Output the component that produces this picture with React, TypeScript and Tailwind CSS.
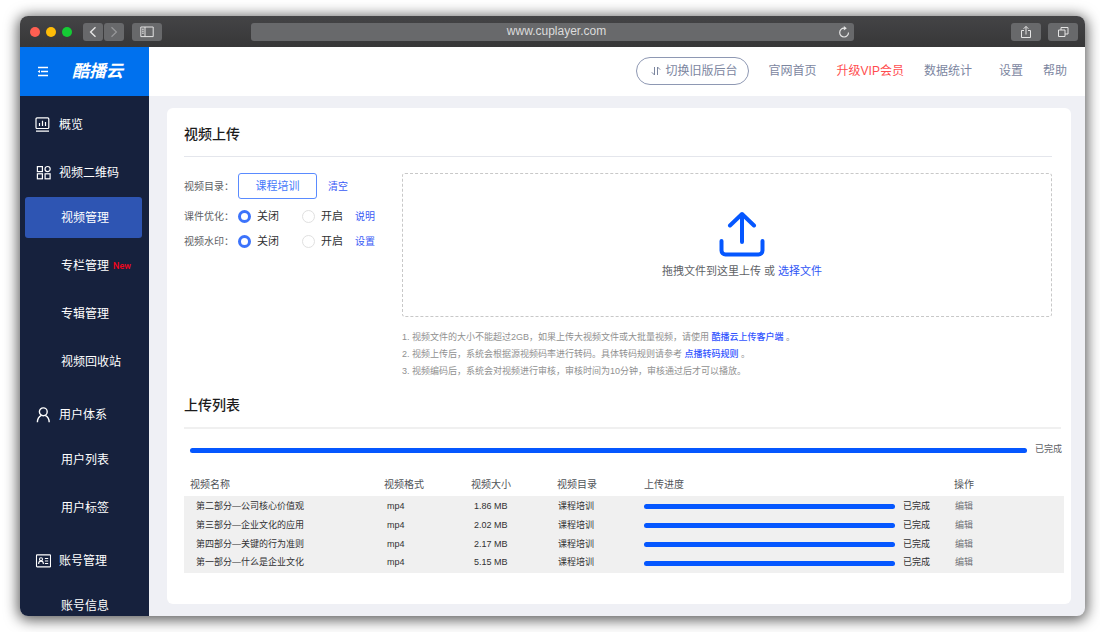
import React from "react";

const videos = [
  { name: "第二部分—公司核心价值观", format: "mp4", size: "1.86 MB", folder: "课程培训", progress: 100 },
  { name: "第三部分—企业文化的应用", format: "mp4", size: "2.02 MB", folder: "课程培训", progress: 100 },
  { name: "第四部分—关键的行为准则", format: "mp4", size: "2.17 MB", folder: "课程培训", progress: 100 },
  { name: "第一部分—什么是企业文化", format: "mp4", size: "5.15 MB", folder: "课程培训", progress: 100 },
];

const OverviewIcon = () => (
  <svg width="16" height="16" viewBox="0 0 16 16" fill="none" stroke="currentColor" strokeWidth="1.2">
    <rect x="1" y="0.900" width="12.800" height="10.600" rx="1" />
    <path d="M4.500 9V6M7.500 9V3.800M10.500 9V5M1 14.200h13" />
  </svg>
);

const GridIcon = () => (
  <svg width="16" height="16" viewBox="0 0 16 16" fill="none" stroke="currentColor" strokeWidth="1.2">
    <rect x="2.4" y="1.600" width="5" height="5" />
    <circle cx="12.600" cy="4.100" r="2.600" />
    <rect x="2.400" y="8.800" width="5" height="5" />
    <rect x="10.100" y="8.800" width="5" height="5" />
  </svg>
);

const UserIcon = () => (
  <svg width="16" height="16" viewBox="0 0 16 16" fill="none" stroke="currentColor" strokeWidth="1.4">
    <circle cx="8.3" cy="4.8" r="3.9" />
    <path d="M2.400 15.300c0-3.400 1.600-5.800 4-7M14.200 15.300c0-3.400-1.600-5.800-4-7" />
  </svg>
);

const AccountIcon = () => (
  <svg width="16" height="16" viewBox="0 0 16 16" fill="none" stroke="currentColor" strokeWidth="1.1">
    <rect x="1.500" y="1.900" width="14" height="12" rx="0.600" />
    <circle cx="6" cy="6.300" r="1.500" />
    <path d="M3.600 11c0-1.800 1-2.900 2.400-2.900s2.400 1.100 2.400 2.900M9.900 5.500h3.300M9.900 8h3.300M9.900 10.500h3.300" />
  </svg>
);

const groups = [
  { title: "概览", icon: OverviewIcon, items: [] },
  {
    title: "视频二维码",
    icon: GridIcon,
    items: [
      { name: "视频管理", active: true },
      { name: "专栏管理", isNew: true },
      { name: "专辑管理" },
      { name: "视频回收站" },
    ],
  },
  { title: "用户体系", icon: UserIcon, items: [{ name: "用户列表" }, { name: "用户标签" }] },
  { title: "账号管理", icon: AccountIcon, items: [{ name: "账号信息" }] },
] as {
  title: string;
  icon: React.FC;
  items: { name: string; active?: boolean; isNew?: boolean }[];
}[];

const chromeButton =
  "flex h-[18px] items-center justify-center rounded-[3px] bg-[#68696b] text-[#e4e4e4]";

const BrowserBar = () => (
  <div className="flex h-[31px] shrink-0 items-center bg-linear-to-b from-[#444446] to-[#373738] pl-[10px] pr-[7px]">
    <div className="flex gap-[6px]">
      <span className="size-[10px] rounded-full bg-[#ff5f52]" />
      <span className="size-[10px] rounded-full bg-[#ffbd08]" />
      <span className="size-[10px] rounded-full bg-[#15cc35]" />
    </div>
    <div className="ml-[11px] flex gap-px">
      <button className={`${chromeButton} w-5`} aria-label="后退">
        <svg width="8" height="12" viewBox="0 0 8 12" fill="none" stroke="currentColor" strokeWidth="1.4">
          <path d="M6.500 1.300 1.600 6l4.900 4.700" />
        </svg>
      </button>
      <button className={`${chromeButton} w-5`} aria-label="前进">
        <svg width="8" height="12" viewBox="0 0 8 12" fill="none" stroke="#97989a" strokeWidth="1.2">
          <path d="M1.500 1.300 6.400 6l-4.900 4.700" />
        </svg>
      </button>
    </div>
    <button className={`${chromeButton} ml-2 w-[30px]`} aria-label="边栏">
      <svg width="14" height="12" viewBox="0 0 14 12" fill="none" stroke="currentColor">
        <path d="M.8 1h12.400v9.600H.8zM5 1v9.600M2 3.200h1.800M2 5.200h1.800M2 7.200h1.800" />
      </svg>
    </button>
    <div className="ml-[89px] mr-[157px] flex h-[18px] flex-1 items-center rounded-[3px] bg-[#68696b] pl-6 pr-1">
      <input
        type="text"
        aria-label="地址"
        defaultValue="www.cuplayer.com"
        className="h-[18px] min-w-0 flex-1 bg-transparent pb-[2px] text-center text-xs text-[#dcdcdc] outline-none"
      />
      <button aria-label="刷新" className="text-[#e4e4e4]">
        <svg width="12" height="12" viewBox="0 0 12 12" fill="none" stroke="currentColor" strokeWidth="1.2">
          <path d="M10.500 6.500A4.400 4.400 0 1 1 6.200 2.200" />
          <path d="M5.800 0 8.800 2.300 5.800 4.600z" fill="currentColor" stroke="none" />
        </svg>
      </button>
    </div>
    <div className="flex gap-[7px]">
      <button className={`${chromeButton} w-[30px]`} aria-label="分享">
        <svg width="12" height="14" viewBox="0 0 12 14" fill="none" stroke="currentColor">
          <path d="M4 5.500H1.500v7h9v-7H8M6 9.500V1.500M3.600 3.800 6 1.400l2.400 2.400" />
        </svg>
      </button>
      <button className={`${chromeButton} w-[30px]`} aria-label="标签页">
        <svg width="12" height="12" viewBox="0 0 12 12" fill="none" stroke="currentColor">
          <path d="M1.500 4h6.500v6.500H1.500zM4 4V1.500h7v6.500H8" />
        </svg>
      </button>
    </div>
  </div>
);

const Sidebar = () => (
  <aside className="flex w-[129px] shrink-0 flex-col bg-[#16213d] text-white">
    <div className="flex h-[49px] shrink-0 items-center bg-[#0071ee] pl-[17px]">
      <button aria-label="收起菜单">
        <svg width="12" height="12" viewBox="0 0 12 12" fill="none" stroke="currentColor" strokeWidth="1.3">
          <path d="M1 1.500h10M4 5.500H11M1 9.500h10" />
          <path d="M.6 5.500 3 3.900v3.200z" fill="currentColor" stroke="none" />
        </svg>
      </button>
      <h1 className="ml-[23px] text-[17px] font-bold italic">酷播云</h1>
    </div>
    <nav className="min-h-0 flex-1 overflow-y-auto pt-[5px] text-xs [scrollbar-width:none]">
      {groups.map(({ title, icon: Icon, items }) => (
        <div key={title}>
          <a href="#" className="flex h-12 items-center gap-2 pl-[15px]">
            <Icon />
            {title}
          </a>
          {items.length > 0 && (
            <ul className="flex flex-col gap-[7px] pb-[9px] pl-[5px] pr-[7px]">
              {items.map((item) => (
                <li key={item.name}>
                  <a
                    href="#"
                    className={`flex h-[41px] items-center gap-1 whitespace-nowrap rounded-[3px] pl-9 ${
                      item.active ? "bg-[#2e55b3]" : ""
                    }`}
                  >
                    {item.name}
                    {item.isNew && <span className="font-[Roboto] text-[9px] font-medium text-[#f5061c]">New</span>}
                  </a>
                </li>
              ))}
            </ul>
          )}
        </div>
      ))}
    </nav>
  </aside>
);

const Header = () => (
  <header className="flex h-[49px] shrink-0 items-center justify-end gap-5 whitespace-nowrap bg-white pb-px pr-[18px] text-xs text-[#7c869f]">
    <button className="flex h-7 items-center gap-[5px] rounded-full border border-[#8e98b3] pl-[14px] pr-[10px]">
      <svg width="10" height="10" viewBox="0 0 10 10" fill="none" stroke="currentColor">
        <path d="M3.500 1v8L.8 6.300M6.500 9V1l2.700 2.700" />
      </svg>
      切换旧版后台
    </button>
    <a href="#">官网首页</a>
    <a href="#" className="text-[#ff4d4f]">升级VIP会员</a>
    <a href="#">数据统计</a>
    <a href="#" className="ml-[7px]">设置</a>
    <a href="#">帮助</a>
  </header>
);

const Option = ({ label, name, link }: { label: string; name: string; link: string }) => (
  <fieldset className="flex h-[25px] items-center text-[11px] text-[#303133]">
    <legend className="float-left w-[54px] text-[10px] text-[#606266]">{label}：</legend>
    <label className="flex w-16 items-center gap-[6px]">
      <input
        type="radio"
        name={name}
        defaultChecked
        className="size-[13px] appearance-none rounded-full border border-[#e0e0e0] checked:border-3 checked:border-[#3c73fb]"
      />
      关闭
    </label>
    <label className="flex w-[53px] items-center gap-[6px]">
      <input
        type="radio"
        name={name}
        className="size-[13px] appearance-none rounded-full border border-[#e0e0e0] checked:border-3 checked:border-[#3c73fb]"
      />
      开启
    </label>
    <a href="#" className="text-[10px] text-[#3a5bf5]">{link}</a>
  </fieldset>
);

const UploadForm = () => (
  <section className="mr-3">
    <h2 className="border-b border-[#e4e6ec] pb-3 text-sm font-medium leading-5 text-[#1c1c1c]">视频上传</h2>
    <div className="flex pt-4">
      <div className="w-[218px] shrink-0">
        <div className="mb-[5px] flex h-[26px] items-center text-[10px]">
          <span className="w-[54px] text-[#606266]">视频目录：</span>
          <button className="h-[26px] w-[79px] rounded-[3px] border border-[#5a8bff] text-[11px] text-[#4679fa]">
            课程培训
          </button>
          <button className="ml-[11px] text-[#3a5bf5]">清空</button>
        </div>
        <Option label="课件优化" name="optimize" link="说明" />
        <Option label="视频水印" name="watermark" link="设置" />
      </div>
      <div className="min-w-0 flex-1">
        <div className="flex h-36 flex-col items-center justify-center rounded-[3px] border border-dashed border-[#c8c8c8] pl-[30px]">
          <svg width="46" height="46" viewBox="0 0 46 46" fill="none" stroke="#0557ff" strokeWidth="4" strokeLinecap="round" strokeLinejoin="round">
            <path d="M23 31V3M11 14.500 23 3l12 11.500M2.500 30v9.500a4 4 0 0 0 4 4h33a4 4 0 0 0 4-4V30" />
          </svg>
          <p className="mt-[6px] text-[11px] leading-4 text-[#606266]">
            拖拽文件到这里上传 或{" "}
            <a href="#" className="text-[#2f55f5]">选择文件</a>
          </p>
        </div>
        <div className="mt-3 text-[9px] leading-[17px] text-[#909090]">
          <p>
            1. 视频文件的大小不能超过2GB，如果上传大视频文件或大批量视频，请使用{" "}
            <a href="#" className="font-medium text-[#3355ff]">酷播云上传客户端</a> 。
          </p>
          <p>
            2. 视频上传后，系统会根据源视频码率进行转码。具体转码规则请参考{" "}
            <a href="#" className="font-medium text-[#3355ff]">点播转码规则</a> 。
          </p>
          <p>3. 视频编码后，系统会对视频进行审核，审核时间为10分钟，审核通过后才可以播放。</p>
        </div>
      </div>
    </div>
  </section>
);

const ProgressBar = ({ value }: { value: number }) => (
  <div className="h-[5px] min-w-0 flex-1 rounded-full bg-[#e6ebf5]">
    <div className="h-full rounded-full bg-[#0557ff]" style={{ width: `${value}%` }} />
  </div>
);

const UploadList = () => (
  <section className="mt-[15px]">
    <h2 className="mr-[3px] border-b-2 border-[#f0f0f0] pb-3 text-sm font-medium leading-5 text-[#1c1c1c]">上传列表</h2>
    <div className="mt-[11px] flex h-5 items-center gap-2 pl-[6px] pr-[2px] text-[9px] text-[#606266]">
      <ProgressBar value={100} />
      <span>已完成</span>
    </div>
    <table className="mt-3 w-full table-fixed text-left text-[9px] text-[#303133]">
      <thead>
        <tr className="h-6 text-[10px] text-[#505358]">
          <th className="w-[200px] p-0 pl-[6px] font-normal">视频名称</th>
          <th className="w-[87px] p-0 font-normal">视频格式</th>
          <th className="w-[86px] p-0 font-normal">视频大小</th>
          <th className="w-[87px] p-0 font-normal">视频目录</th>
          <th className="p-0 font-normal">上传进度</th>
          <th className="w-[110px] p-0 font-normal">操作</th>
        </tr>
      </thead>
      <tbody className="border-b-2 border-[#f0f0f0] bg-[#f0f0f0]">
        {videos.map((video) => (
          <tr key={video.name} className="h-[19px]">
            <td className="p-0 pl-3 pt-[2px]">{video.name}</td>
            <td className="p-0 pl-[3px] pt-[2px]">{video.format}</td>
            <td className="p-0 pl-[3px] pt-[2px]">{video.size}</td>
            <td className="p-0 pl-px pt-[2px]">{video.folder}</td>
            <td className="p-0 pt-[2px]">
              <div className="flex items-center gap-2 pr-6">
                <ProgressBar value={video.progress} />
                <span>已完成</span>
              </div>
            </td>
            <td className="p-0 pl-px pt-[2px]">
              <a href="#" className="text-[#707378]">编辑</a>
            </td>
          </tr>
        ))}
      </tbody>
    </table>
  </section>
);

const App = () => {
  return (
    <div className="h-screen bg-white py-4 pl-5 pr-[15px] font-['Liberation_Sans','Noto_Sans_CJK_SC',sans-serif]">
      <div className="flex h-full flex-col overflow-hidden rounded-lg bg-[#eff0f5] shadow-[0_2px_14px_2px_rgba(0,0,0,0.65)]">
        <BrowserBar />
        <div className="flex min-h-0 flex-1">
          <Sidebar />
          <div className="flex min-w-0 flex-1 flex-col">
            <Header />
            <main className="min-h-0 flex-1 pb-3 pl-[18px] pr-[14px] pt-3">
              <div className="h-full rounded-md bg-white pb-4 pl-[17px] pr-[7px] pt-4">
                <UploadForm />
                <UploadList />
              </div>
            </main>
          </div>
        </div>
      </div>
    </div>
  );
};

export default App;
